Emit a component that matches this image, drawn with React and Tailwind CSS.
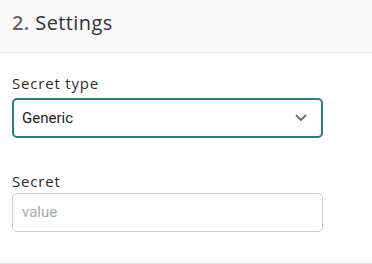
export default function App() {
  return (
    <div className="w-[372px] h-[264px] bg-white overflow-hidden">
      <div className="h-[53px] bg-[#f9f9f9] border-b border-[#e4e8e8] px-3 pt-[9px]">
        <h2 className="text-[20px] leading-[28px] text-[#333] font-['Open_Sans',sans-serif] font-medium tracking-[0.4px]">
          <span className="text-[#666] font-semibold">2.</span> Settings
        </h2>
      </div>
      <div className="px-3 pt-[20px] pb-[31px] border-b border-[#e0e0e0] w-full">
        <div className="w-[311px]">
          <div className="text-[15px] leading-[20px] text-[#2b2b2b] font-['Open_Sans',sans-serif] font-medium tracking-[0.8px]">Secret type</div>
          <div className="mt-[5px] h-[40px] border-2 border-[#2f7c77] rounded-[5px] flex items-center justify-between pl-[8px] pr-[14px]">
            <span className="text-[15px] text-[#222] font-['Roboto',sans-serif]">Generic</span>
            <svg width="12" height="8" viewBox="0 0 12 8" fill="none">
              <path d="M1.5 1.5 L6 6 L10.5 1.5" stroke="#6b6b6b" strokeWidth="1.8" strokeLinecap="round" strokeLinejoin="round" />
            </svg>
          </div>
          <div className="mt-[33px] text-[15px] leading-[20px] text-[#2b2b2b] font-['Open_Sans',sans-serif] font-medium tracking-[0.8px]">Secret</div>
          <div className="mt-[2px] h-[39px] border border-[#cccccc] rounded-[5px] flex items-center pl-[9px]">
            <span className="text-[15px] text-[#aaa] font-['Roboto',sans-serif]">value</span>
          </div>
        </div>
      </div>
    </div>
  );
}
